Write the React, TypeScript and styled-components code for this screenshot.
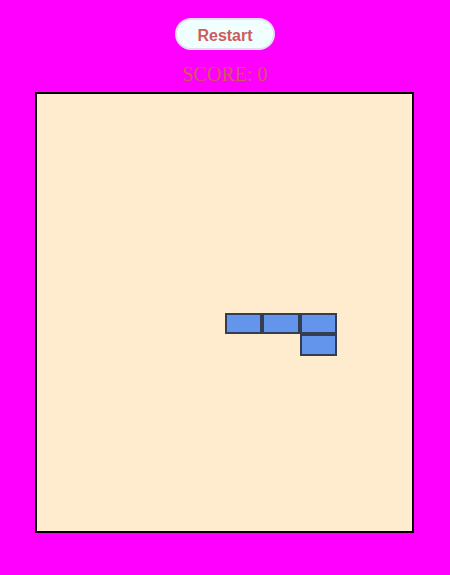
import styled, { createGlobalStyle } from 'styled-components';

const GlobalStyle = createGlobalStyle`
  html, body {
    margin: 0;
    padding: 0;
    background: #ff00ff;
  }
  body {
    font-family: "Liberation Serif", serif;
  }
`;

const Page = styled.div`
  width: 450px;
  height: 575px;
  display: flex;
  flex-direction: column;
  align-items: center;
  padding-top: 18px;
  box-sizing: border-box;
`;

const RestartButton = styled.button`
  width: 100px;
  height: 32px;
  border-radius: 16px;
  border: 2px solid #e6dcef;
  background: #f0ffff;
  color: #cd5c5c;
  font-family: "Liberation Sans", Arial, sans-serif;
  font-weight: bold;
  font-size: 16px;
  cursor: pointer;
  padding: 3px 0 0;
`;

const Score = styled.div`
  margin-top: 13px;
  font-family: "Liberation Serif", serif;
  font-size: 20px;
  color: #cd5c5c;
  line-height: 23px;
  height: 23px;
`;

const Board = styled.div`
  margin-top: 6px;
  margin-left: -1px;
  width: 375px;
  height: 437px;
  border: 2px solid #000;
  background: #ffebcd;
  display: grid;
  grid-template-columns: repeat(10, 1fr);
  grid-template-rows: repeat(20, 1fr);
`;

const Cell = styled.div<{ $col: number; $row: number }>`
  grid-column: ${(p) => p.$col + 1};
  grid-row: ${(p) => p.$row + 1};
  background: #6495ed;
  border: 2px solid rgba(40, 40, 40, 0.8);
  box-sizing: border-box;
`;

const piece = [
  { col: 5, row: 10 },
  { col: 6, row: 10 },
  { col: 7, row: 10 },
  { col: 7, row: 11 },
];

export default function App() {
  return (
    <>
      <GlobalStyle />
      <Page>
        <RestartButton>Restart</RestartButton>
        <Score>SCORE: 0</Score>
        <Board>
          {piece.map((c) => (
            <Cell key={`${c.col}-${c.row}`} $col={c.col} $row={c.row} />
          ))}
        </Board>
      </Page>
    </>
  );
}
